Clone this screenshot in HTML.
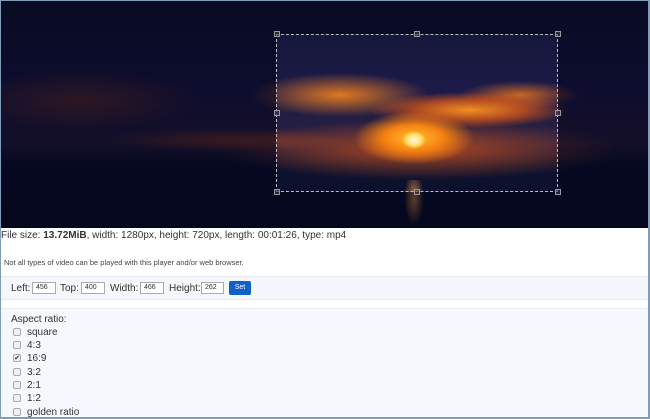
<!DOCTYPE html>
<html><head><style>
*{margin:0;padding:0;box-sizing:border-box}
body{width:650px;height:419px;overflow:hidden;background:#fff;font-family:"Liberation Sans",sans-serif;position:relative}
.frame{position:absolute;inset:0;border:1px solid #7f9db9;border-right:2px solid #7f9db9;border-bottom:2px solid #7f9db9;pointer-events:none;z-index:10}
.vid{position:absolute;left:0;top:0;width:650px;height:228px;background:#0b0f26;overflow:hidden}
.sky{position:absolute;inset:0;background:
 radial-gradient(ellipse 12px 9px at 414px 140px,#fffbe0 0,#ffe070 60%,transparent 100%),
 radial-gradient(ellipse 60px 26px at 414px 138px,#ffc030 0,#f58010 50%,transparent 100%),
 radial-gradient(ellipse 100px 18px at 470px 110px,rgba(255,150,30,.95) 0,rgba(230,90,20,.7) 55%,transparent 100%),
 radial-gradient(ellipse 90px 22px at 340px 95px,rgba(245,130,30,.9) 0,transparent 100%),
 radial-gradient(ellipse 60px 14px at 520px 95px,rgba(245,120,30,.8) 0,transparent 100%),
 radial-gradient(ellipse 200px 30px at 420px 150px,rgba(200,80,30,.85) 0,transparent 100%),
 radial-gradient(ellipse 120px 30px at 80px 100px,rgba(130,60,40,.6) 0,transparent 100%),
 radial-gradient(ellipse 120px 12px at 230px 140px,rgba(150,60,30,.7) 0,transparent 100%),
 linear-gradient(#121634 0,#1c1a48 40%,#2a2040 62%,#0d1230 72%,#0a0e28 100%)}
.refl{position:absolute;left:404px;top:180px;width:20px;height:46px;background:radial-gradient(ellipse at 50% 40%,rgba(240,160,70,.75),transparent 70%)}
.dark{position:absolute;background:rgba(0,0,20,.5)}
.sel{position:absolute;left:276px;top:34px;width:282px;height:158px;border:1px dashed #bbb}
.h{position:absolute;width:6px;height:6px;border:1px solid #999;background:rgba(60,60,80,.6)}
.info{position:absolute;left:1px;top:230px;font-size:10px;color:#333}
.note{position:absolute;left:4px;top:258px;font-size:7.5px;color:#444}
.bar{position:absolute;left:1px;top:276px;width:647px;height:24px;background:#f4f7fb;border-top:1px solid #e8ecf0;border-bottom:1px solid #e8ecf0;font-size:10px;color:#333}
.bar span{position:absolute;top:6px}
.bar i{position:absolute;top:5px;height:12px;border:1px solid #aaa;background:#fff;font-style:normal;font-size:7px;padding:1px 3px}
.btn{position:absolute;left:228px;top:4px;width:22px;height:14px;background:#1060c8;border-radius:2px;color:#fff;font-size:7px;text-align:center;line-height:14px}
.asp{position:absolute;left:1px;top:308px;width:647px;height:111px;background:#f5f8fc;border-top:1px solid #e8ecf0;font-size:10px;color:#333}
.asp div{position:absolute;left:26px}
.cb{position:absolute;left:12px;width:8px;height:8px;border:1px solid #aaa;border-radius:2px;background:#f0f0f0;font-size:7px;line-height:7px;text-align:center}
</style></head><body>
<div class="vid"><div class="sky"></div><div class="refl"></div>
<div class="dark" style="left:0;top:0;width:650px;height:34px"></div>
<div class="dark" style="left:0;top:192px;width:650px;height:36px"></div>
<div class="dark" style="left:0;top:34px;width:276px;height:158px"></div>
<div class="dark" style="left:558px;top:34px;width:92px;height:158px"></div>
<div class="sel"></div>
<div class="h" style="left:274px;top:31px"></div><div class="h" style="left:414px;top:31px"></div><div class="h" style="left:555px;top:31px"></div>
<div class="h" style="left:274px;top:110px"></div><div class="h" style="left:555px;top:110px"></div>
<div class="h" style="left:274px;top:189px"></div><div class="h" style="left:414px;top:189px"></div><div class="h" style="left:555px;top:189px"></div>
</div>
<div class="info">File size: <b>13.72MiB</b>, width: 1280px, height: 720px, length: 00:01:26, type: mp4</div>
<div class="note">Not all types of video can be played with this player and/or web browser.</div>
<div class="bar">
<span style="left:10px">Left:</span><i style="left:31px;width:24px">456</i>
<span style="left:59px">Top:</span><i style="left:80px;width:24px">400</i>
<span style="left:109px">Width:</span><i style="left:139px;width:24px">466</i>
<span style="left:168px">Height:</span><i style="left:200px;width:23px">262</i>
<div class="btn">Set</div></div>
<div class="asp">
<div style="left:10px;top:5px">Aspect ratio:</div>
<span class="cb" style="top:19px"></span><div style="top:18px">square</div>
<span class="cb" style="top:32px"></span><div style="top:31px">4:3</div>
<span class="cb" style="top:45px">✔</span><div style="top:44px">16:9</div>
<span class="cb" style="top:59px"></span><div style="top:58px">3:2</div>
<span class="cb" style="top:72px"></span><div style="top:71px">2:1</div>
<span class="cb" style="top:85px"></span><div style="top:84px">1:2</div>
<span class="cb" style="top:99px"></span><div style="top:98px">golden ratio</div>
</div>
<div class="frame"></div>
</body></html>
